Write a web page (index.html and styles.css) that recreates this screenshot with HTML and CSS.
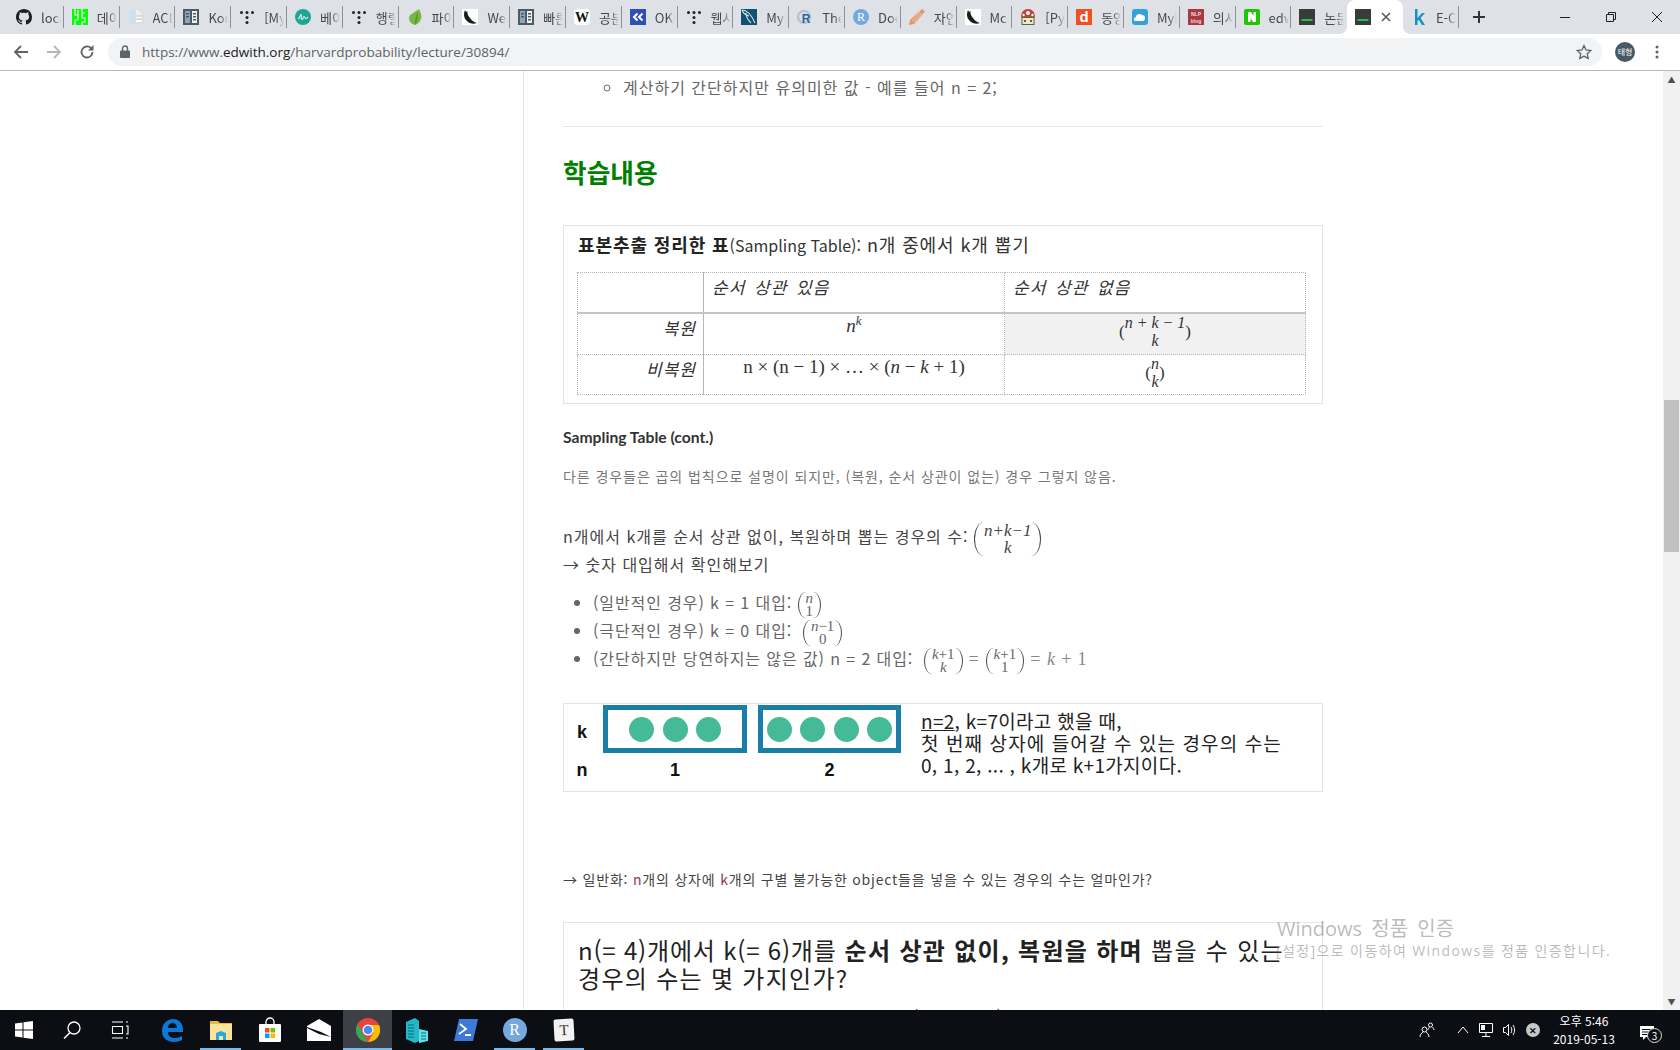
FILE: index.html
```html
<!DOCTYPE html>
<html lang="ko">

<head>
    <meta charset="UTF-8">
    <title>edwith - Harvard Probability</title>
    <link rel="stylesheet" href="styles.css">
</head>

<body>
    <svg class="sprite" xmlns="http://www.w3.org/2000/svg">
        <symbol id="i-gh" viewBox="0 0 16 16"><path fill="#1b1f23" d="M8 0C3.58 0 0 3.58 0 8c0 3.54 2.29 6.53 5.47 7.59.4.07.55-.17.55-.38 0-.19-.01-.82-.01-1.49-2.01.37-2.53-.49-2.69-.94-.09-.23-.48-.94-.82-1.13-.28-.15-.68-.52-.01-.53.63-.01 1.08.58 1.23.82.72 1.21 1.87.87 2.33.66.07-.52.28-.87.51-1.07-1.78-.2-3.64-.89-3.64-3.95 0-.87.31-1.59.82-2.15-.08-.2-.36-1.02.08-2.12 0 0 .67-.21 2.2.82.64-.18 1.32-.27 2-.27.68 0 1.36.09 2 .27 1.53-1.04 2.2-.82 2.2-.82.44 1.1.16 1.92.08 2.12.51.56.82 1.27.82 2.15 0 3.07-1.87 3.75-3.65 3.95.29.25.54.73.54 1.48 0 1.07-.01 1.93-.01 2.2 0 .21.15.46.55.38A8.013 8.013 0 0016 8c0-4.42-3.58-8-8-8z"/></symbol>
        <symbol id="i-green" viewBox="0 0 16 16"><rect width="16" height="16" fill="#0f0"/><path fill="none" stroke="#fff" stroke-width="1.200" d="M3 0v6h3V1M6 6v5H3v5M10 0v4h3M10 4v5h3v4h-3v3"/></symbol>
        <symbol id="i-doc" viewBox="0 0 16 16"><path fill="#cfe0ef" d="M1 1h7v14H1z"/><path fill="#eef1f4" d="M8 1h2l3 3v2H8z"/><path fill="#d8dde2" d="M6 6h10v9H6z"/><path fill="#fff" d="M8 8h6v1H8zM8 11h6v2H8z"/></symbol>
        <symbol id="i-panel" viewBox="0 0 16 16"><rect width="16" height="16" fill="#4a5a66"/><path fill="#8fa6b6" d="M2 2h5v12H2z"/><path fill="#eef2f5" d="M9 2h5v12H9z"/><path fill="#4a5a66" d="M10 4h3v1.500h-3zM10 7h3v1.500h-3zM10 10h3v1.500h-3zM3 4h3v1.500H3zM3 7h3v1.500H3z"/></symbol>
        <symbol id="i-dots" viewBox="0 0 16 16"><g fill="#222"><circle cx="2.500" cy="3.500" r="1.500"/><circle cx="8" cy="3.500" r="1.500"/><circle cx="13.500" cy="3.500" r="1.500"/><circle cx="8" cy="8.500" r="1.500"/><circle cx="8" cy="13.500" r="1.500"/></g></symbol>
        <symbol id="i-teal" viewBox="0 0 16 16"><circle cx="8" cy="8" r="8" fill="#1fa591"/><path fill="none" stroke="#d8f3ec" stroke-width="1.100" d="M3 9.500c1.500 1 2-4 3-4s-.5 5 1 5 1-3 2-3 .5 2 2 2 1.500-1 2-1.500"/></symbol>
        <symbol id="i-leaf" viewBox="0 0 16 16"><path fill="#7ab648" d="M12 0c2 4 3 7 2 10-1 3-3 5-6 6-3-1-6-3-6-7 0-4 7-6 10-9z"/><path fill="#5d9732" d="M8 16c-.5-5 .5-9 3-13 0 5 0 9-3 13z"/></symbol>
        <symbol id="i-feather" viewBox="0 0 16 16"><rect width="16" height="16" fill="#fff"/><path fill="#1c1c1c" d="M3 1c-2 5-1 9 3 12 3 2 6 2 9 1-3-1-5-2-7-5C6 7 5 4 5.500 2L4 3z"/></symbol>
        <symbol id="i-wiki" viewBox="0 0 16 16"><rect width="16" height="16" rx="4" fill="#fff"/><text x="8" y="12.500" text-anchor="middle" class="fav-text fav-wiki">W</text></symbol>
        <symbol id="i-ok" viewBox="0 0 16 16"><rect width="16" height="16" fill="#2f4fb4"/><path fill="none" stroke="#fff" stroke-width="2" d="M7.500 4.500 4 8l3.500 3.500M12.500 4.500 9 8l3.500 3.500"/></symbol>
        <symbol id="i-mysql" viewBox="0 0 16 16"><rect width="16" height="16" fill="#11526f"/><path fill="none" stroke="#cfe3ec" stroke-width="1.100" d="M1 1c5 0 9 4 13 13M1 1c1 4 4 5 7 6M5 4c0 4 2 7 5 10"/></symbol>
        <symbol id="i-rstudio" viewBox="0 0 16 16"><circle cx="7" cy="8" r="6" fill="none" stroke="#bcc3cb" stroke-width="2.400"/><text x="9" y="14" text-anchor="middle" class="fav-text fav-r">R</text></symbol>
        <symbol id="i-rdoc" viewBox="0 0 16 16"><circle cx="8" cy="8" r="8" fill="#75a8dc"/><text x="8" y="12" text-anchor="middle" class="fav-text fav-rdoc">R</text></symbol>
        <symbol id="i-pencil" viewBox="0 0 16 16"><path fill="#e8946a" d="M13 0l3 2.500L5 15l-5 1 1-5z"/><path fill="none" stroke="#fbe3d4" stroke-width=".7" d="M11 3 3 12M13 4l-8 9"/></symbol>
        <symbol id="i-mush" viewBox="0 0 16 16"><path fill="#c9403a" d="M1 8c0-5 3-8 7-8s7 3 7 8z"/><circle cx="8" cy="4" r="2" fill="#fff"/><circle cx="3.500" cy="6" r="1.200" fill="#fff"/><circle cx="12.500" cy="6" r="1.200" fill="#fff"/><rect x="2" y="8.500" width="12" height="7" fill="#f2e6c4" stroke="#4a6b46"/><path fill="#4a6b46" d="M4 11h2v2H4zM10 11h2v2h-2z"/></symbol>
        <symbol id="i-d" viewBox="0 0 16 16"><rect width="16" height="16" fill="#f04e23"/><text x="8" y="13" text-anchor="middle" class="fav-text fav-d">d</text></symbol>
        <symbol id="i-cloud" viewBox="0 0 16 16"><rect width="16" height="16" rx="3" fill="#36a0da"/><path fill="#fff" d="M3 12c-2-1-1-4 1-4 0-3 4-4 6-2 2 0 3 1 3 3s-1 3-2 3z"/></symbol>
        <symbol id="i-nlp" viewBox="0 0 16 16"><rect width="16" height="16" fill="#a8393f"/><text x="8" y="7" text-anchor="middle" class="fav-text fav-nlp">NLP</text><text x="8" y="14" text-anchor="middle" class="fav-text fav-nlp">blog</text></symbol>
        <symbol id="i-n" viewBox="0 0 16 16"><rect width="16" height="16" rx="2" fill="#1ec800"/><path fill="#fff" d="M4 3h3l2.500 4V3H12v10H9L6.500 9v4H4z"/></symbol>
        <symbol id="i-term" viewBox="0 0 16 16"><rect width="16" height="16" fill="#3a3a3a"/><rect x="2.500" y="10" width="11" height="2" fill="#1dc24b"/></symbol>
        <symbol id="i-k" viewBox="0 0 16 16"><path fill="#1293c4" d="M4 0h2.500v9L11 4h3l-4.500 5L14 16h-3L7.700 10.800 6.500 12v4H4z"/></symbol>
    </svg>

    <div class="tabstrip">
        <div class="tab"><svg class="fav"><use href="#i-gh"/></svg><span class="tab-title">localhost</span></div>
        <div class="tab"><svg class="fav"><use href="#i-green"/></svg><span class="tab-title">데이터</span></div>
        <div class="tab"><svg class="fav"><use href="#i-doc"/></svg><span class="tab-title">ACL</span></div>
        <div class="tab"><svg class="fav"><use href="#i-panel"/></svg><span class="tab-title">Korean</span></div>
        <div class="tab"><svg class="fav"><use href="#i-dots"/></svg><span class="tab-title">[My</span></div>
        <div class="tab"><svg class="fav"><use href="#i-teal"/></svg><span class="tab-title">베이즈</span></div>
        <div class="tab"><svg class="fav"><use href="#i-dots"/></svg><span class="tab-title">행렬</span></div>
        <div class="tab"><svg class="fav"><use href="#i-leaf"/></svg><span class="tab-title">파이썬</span></div>
        <div class="tab"><svg class="fav"><use href="#i-feather"/></svg><span class="tab-title">Welcome</span></div>
        <div class="tab"><svg class="fav"><use href="#i-panel"/></svg><span class="tab-title">빠른</span></div>
        <div class="tab"><svg class="fav"><use href="#i-wiki"/></svg><span class="tab-title">공분산</span></div>
        <div class="tab"><svg class="fav"><use href="#i-ok"/></svg><span class="tab-title">OKKY</span></div>
        <div class="tab"><svg class="fav"><use href="#i-dots"/></svg><span class="tab-title">웹사이트</span></div>
        <div class="tab"><svg class="fav"><use href="#i-mysql"/></svg><span class="tab-title">MySQL</span></div>
        <div class="tab"><svg class="fav"><use href="#i-rstudio"/></svg><span class="tab-title">The</span></div>
        <div class="tab"><svg class="fav"><use href="#i-rdoc"/></svg><span class="tab-title">Docs</span></div>
        <div class="tab"><svg class="fav"><use href="#i-pencil"/></svg><span class="tab-title">자연어</span></div>
        <div class="tab"><svg class="fav"><use href="#i-feather"/></svg><span class="tab-title">Mc</span></div>
        <div class="tab"><svg class="fav"><use href="#i-mush"/></svg><span class="tab-title">[Python</span></div>
        <div class="tab"><svg class="fav"><use href="#i-d"/></svg><span class="tab-title">동영상</span></div>
        <div class="tab"><svg class="fav"><use href="#i-cloud"/></svg><span class="tab-title">MyDrive</span></div>
        <div class="tab"><svg class="fav"><use href="#i-nlp"/></svg><span class="tab-title">의사결정</span></div>
        <div class="tab"><svg class="fav"><use href="#i-n"/></svg><span class="tab-title">edwith</span></div>
        <div class="tab no-sep"><svg class="fav"><use href="#i-term"/></svg><span class="tab-title">논문</span></div>
        <div class="tab tab-active">
            <svg class="fav"><use href="#i-term"/></svg>
            <svg class="tab-close" width="10" height="10" viewBox="0 0 10 10"><path stroke="#555" stroke-width="1.500" d="M1 1l8 8M9 1 1 9"/></svg>
        </div>
        <div class="tab"><svg class="fav"><use href="#i-k"/></svg><span class="tab-title">E-Commerce</span></div>
        <div class="new-tab">
            <svg width="14" height="14" viewBox="0 0 14 14"><path fill="none" stroke="#333" stroke-width="2" d="M7 1v12M1 7h12"/></svg>
        </div>
        <div class="window-controls">
            <svg width="12" height="12" viewBox="0 0 12 12"><path stroke="#222" d="M1 6.500h10"/></svg>
            <svg width="12" height="12" viewBox="0 0 12 12"><path fill="none" stroke="#222" d="M1.500 3.500h7v7h-7zM3.500 3.500v-2h7v7h-2"/></svg>
            <svg width="12" height="12" viewBox="0 0 12 12"><path stroke="#222" d="M1 1l10 10M11 1 1 11"/></svg>
        </div>
    </div>

    <div class="toolbar">
        <svg class="tool" viewBox="0 0 16 16"><path fill="none" stroke="#5f6368" stroke-width="1.800" d="M15 8H2M8 2 2 8l6 6"/></svg>
        <svg class="tool" viewBox="0 0 16 16"><path fill="none" stroke="#b5b8bb" stroke-width="1.800" d="M1 8h13M8 2l6 6-6 6"/></svg>
        <svg class="tool" viewBox="0 0 16 16"><path fill="none" stroke="#5f6368" stroke-width="1.800" d="M13.500 8A5.500 5.500 0 1 1 12 4.200"/><path fill="#5f6368" d="M14.500 1v5.500H9z"/></svg>
        <div class="omnibox">
            <svg class="lock" width="10" height="13" viewBox="0 0 10 13"><path fill="none" stroke="#5f6368" stroke-width="1.400" d="M2.500 6V3.500a2.500 2.500 0 0 1 5 0V6"/><rect y="5.500" width="10" height="7.500" rx="1" fill="#5f6368"/></svg>
            <span class="url"><span class="url-dim">https://www.</span><span class="url-host">edwith.org</span><span class="url-dim">/harvardprobability/lecture/30894/</span></span>
            <svg class="star" width="16" height="16" viewBox="0 0 16 16"><path fill="none" stroke="#5f6368" stroke-width="1.300" d="M8 1.500l2 4.500 4.800.5-3.600 3.200 1 4.800L8 12.100l-4.200 2.400 1-4.800L1.200 6.500 6 6z"/></svg>
        </div>
        <div class="avatar">태형</div>
        <svg class="kebab" width="4" height="14" viewBox="0 0 4 14"><g fill="#5f6368"><circle cx="2" cy="2" r="1.500"/><circle cx="2" cy="7" r="1.500"/><circle cx="2" cy="12" r="1.500"/></g></svg>
    </div>

    <div class="viewport">
        <aside class="sidebar"></aside>
        <main class="lecture">
            <ul class="sub-list">
                <li>계산하기 간단하지만 유의미한 값 - 예를 들어 n = 2;</li>
            </ul>
            <hr class="rule">
            <h2 class="section-title">학습내용</h2>

            <section class="note note-table">
                <p class="note-title"><b>표본추출 정리한 표</b><span class="latin">(Sampling Table):</span> n개 중에서 k개 뽑기</p>
                <table class="sampling">
                    <tr class="head-row">
                        <th class="row-head"></th>
                        <th>순서 상관 있음</th>
                        <th>순서 상관 없음</th>
                    </tr>
                    <tr class="row-one">
                        <td class="row-head">복원</td>
                        <td class="math-cell"><i>n<sup>k</sup></i></td>
                        <td class="math-cell shaded">
                            <span class="binom binom-glyph"><span class="binom-stack"><i>n + k − 1</i><i>k</i></span></span>
                        </td>
                    </tr>
                    <tr class="row-two">
                        <td class="row-head">비복원</td>
                        <td class="math-cell">n × (n − 1) × … × (<i>n</i> − <i>k</i> + 1)</td>
                        <td class="math-cell">
                            <span class="binom binom-glyph"><span class="binom-stack"><i>n</i><i>k</i></span></span>
                        </td>
                    </tr>
                </table>
            </section>

            <h3 class="sub-title">Sampling Table (cont.)</h3>
            <p class="muted-note">다른 경우들은 곱의 법칙으로 설명이 되지만, (복원, 순서 상관이 없는) 경우 그렇지 않음.</p>

            <p class="body-line first-line">n개에서 k개를 순서 상관 없이, 복원하며 뽑는 경우의 수:
                <span class="binom binom-big"><span class="binom-stack"><i>n+k−1</i><i>k</i></span></span>
            </p>
            <p class="body-line">→ 숫자 대입해서 확인해보기</p>

            <ul class="case-list">
                <li>(일반적인 경우) k = 1 대입: <span class="binom"><span class="binom-stack"><i>n</i><span>1</span></span></span></li>
                <li>(극단적인 경우) k = 0 대입: &nbsp;<span class="binom"><span class="binom-stack"><span><i>n</i>−1</span><span>0</span></span></span></li>
                <li>(간단하지만 당연하지는 않은 값) n = 2 대입: &nbsp;<span class="binom"><span class="binom-stack"><span><i>k</i>+1</span><i>k</i></span></span><span class="math-tail math-eq">=</span><span class="binom"><span class="binom-stack"><span><i>k</i>+1</span><span>1</span></span></span><span class="math-tail math-eq">=</span><span class="math-tail"><i>k</i> + 1</span></li>
            </ul>

            <section class="note note-boxes">
                <div class="box-grid">
                    <b class="axis axis-k">k</b>
                    <div class="urn">
                        <span class="ball"></span><span class="ball"></span><span class="ball"></span>
                    </div>
                    <div class="urn">
                        <span class="ball"></span><span class="ball"></span><span class="ball"></span><span class="ball"></span>
                    </div>
                    <b class="axis">n</b>
                    <b class="axis">1</b>
                    <b class="axis">2</b>
                </div>
                <p class="box-text"><u>n=2</u>, k=7이라고 했을 때,<br><span class="box-wide">첫 번째 상자에 들어갈 수 있는 경우의 수는</span><br>0, 1, 2, ... , k개로 k+1가지이다.</p>
            </section>

            <p class="general">→ 일반화: <span class="pink">n</span>개의 상자에 <span class="pink">k</span>개의 구별 불가능한 object들을 넣을 수 있는 경우의 수는 얼마인가?</p>

            <section class="note note-quiz">
                <p class="quiz-text"><span class="quiz-lead">n(= 4)개에서 k(= 6)개를</span> <b>순서 상관 없이, 복원을 하며</b> 뽑을 수 있는<br>경우의 수는 몇 가지인가?</p>
                <p class="quiz-math"><span>(</span><span>)</span></p>
            </section>
        </main>
        <div class="scrollbar">
            <span class="scroll-arrow">▲</span>
            <div class="scroll-track"><div class="scroll-thumb"></div></div>
            <span class="scroll-arrow">▼</span>
        </div>
        <div class="watermark">
            <div class="wm-title">Windows 정품 인증</div>
            <div class="wm-sub">[설정]으로 이동하여 Windows를 정품 인증합니다.</div>
        </div>
    </div>

    <footer class="taskbar">
        <div class="task-group">
            <div class="task-item task-sys">
                <svg width="18" height="18" viewBox="0 0 18 18"><path fill="#fff" d="M0 2.500 7.500 1.400v7.100H0zM8.500 1.300 18 0v8.500H8.500zM0 9.500h7.500v7.100L0 15.500zM8.500 9.500H18V18l-9.500-1.300z"/></svg>
            </div>
            <div class="task-item task-sys">
                <svg width="18" height="18" viewBox="0 0 18 18"><circle cx="11" cy="7" r="6" fill="none" stroke="#fff" stroke-width="1.300"/><path stroke="#fff" stroke-width="1.500" d="M7 11.500 1 17.500"/></svg>
            </div>
            <div class="task-item task-sys">
                <svg width="18" height="18" viewBox="0 0 18 18"><path fill="none" stroke="#fff" stroke-width="1.100" d="M1 1h11M1 17h11M1.500 5.500h10v7h-10zM15 1h2M15 5h2v8h-2M15 17h2"/></svg>
            </div>
            <div class="task-item">
                <svg width="24" height="24" viewBox="0 0 24 24"><path fill="#0a78d7" d="M2 13C2 5 8 1 13 1c6 0 10 4 10 11v2H8c0 4 3 6 7 6 3 0 5-1 7-2v4c-2 1-5 2-8 2C7 24 2 20 2 13zm6-3h9c0-3-2-5-4-5-3 0-5 2-5 5z"/></svg>
            </div>
            <div class="task-item task-open">
                <svg width="24" height="24" viewBox="0 0 24 24"><path fill="#e8b93f" d="M1 3h8l2 2h12v4H1z"/><path fill="#fbe49a" d="M1 6h22v16H1z"/><path fill="#29a8e0" d="M7 22v-7l5-2 5 2v7h-3v-4h-4v4z"/></svg>
            </div>
            <div class="task-item">
                <svg width="24" height="26" viewBox="0 0 24 26"><path fill="none" stroke="#fff" stroke-width="1.300" d="M8 8V5a4 4 0 0 1 8 0v3"/><rect x="1" y="7" width="22" height="18" rx="1" fill="#fff"/><path fill="#f25022" d="M7 11h4.500v4.500H7z"/><path fill="#7fba00" d="M12.500 11H17v4.500h-4.500z"/><path fill="#00a4ef" d="M7 16.500h4.500V21H7z"/><path fill="#ffb900" d="M12.500 16.500H17V21h-4.500z"/></svg>
            </div>
            <div class="task-item">
                <svg width="24" height="22" viewBox="0 0 24 22"><path fill="#fff" d="M0 7 12 0l12 7v15H0z"/><path fill="#0b0e13" d="M0 8l14 5 10 5-12-3L0 9z"/></svg>
            </div>
            <div class="task-item task-open task-active">
                <svg width="24" height="24" viewBox="0 0 24 24"><circle cx="12" cy="12" r="12" fill="#e8453c"/><path fill="#34a853" d="M12 24A12 12 0 0 1 1.600 6l6 10.500L12 24z"/><path fill="#fbbc05" d="M12 24 17.500 14.500 12 7h11a12 12 0 0 1-11 17z"/><circle cx="12" cy="12" r="5.500" fill="#fff"/><circle cx="12" cy="12" r="4.300" fill="#4a8af4"/></svg>
            </div>
            <div class="task-item">
                <svg width="24" height="26" viewBox="0 0 24 26"><path fill="#23b7c8" d="M1 5l9-4 4 3v20l-4 2-9-4z"/><path fill="#5fe0ea" d="M14 12l9 2v10l-9 2z"/><path stroke="#0b6c78" d="M3 8h6M3 11h6M3 14h6M3 17h6M3 20h6M16 16h5M16 19h5M16 22h5"/></svg>
            </div>
            <div class="task-item">
                <svg width="24" height="22" viewBox="0 0 24 22"><path fill="#3e78d8" d="M5 0h19l-5 22H0z"/><path fill="none" stroke="#fff" stroke-width="1.800" d="M6 5l6 5-7 5M11 16h6"/></svg>
            </div>
            <div class="task-item task-open">
                <span class="r-icon">R</span>
            </div>
            <div class="task-item task-open">
                <span class="t-icon">T</span>
            </div>
        </div>
        <div class="tray">
            <svg class="tray-people" width="16" height="16" viewBox="0 0 16 16"><g fill="none" stroke="#fff"><circle cx="5.500" cy="7.500" r="2.500"/><path d="M1 15c0-3 2-4 3-5M10 15c0-3-2-4-3-5"/><circle cx="11.500" cy="3" r="2"/><path d="M9 8c0-1 1-2 1.500-3M15 8c0-1-1-2-1.500-3"/></g></svg>
            <svg class="tray-up" width="12" height="8" viewBox="0 0 12 8"><path fill="none" stroke="#fff" d="M1 7l5-6 5 6"/></svg>
            <svg class="tray-net" width="16" height="16" viewBox="0 0 16 16"><path fill="none" stroke="#fff" d="M1.500 1.500h13v9h-13zM8 10.500v4M4 14.500h8"/><path fill="#fff" d="M3 3h4v5H3z"/></svg>
            <svg class="tray-vol" width="16" height="16" viewBox="0 0 16 16"><path fill="none" stroke="#fff" d="M1.500 5.500h2l3-3v11l-3-3h-2zM9 5c1 2 1 4 0 6M11 3c2 3 2 7 0 10"/></svg>
            <span class="tray-x">✕</span>
            <div class="clock"><span>오후 5:46</span><span>2019-05-13</span></div>
            <div class="notify">
                <svg width="16" height="16" viewBox="0 0 16 16"><path fill="#fff" d="M1 1h14v11H7l-3 3v-3H1z"/><path stroke="#0b0e13" d="M3 4.500h10M3 7h10M3 9.500h10"/></svg>
                <span class="notify-count">3</span>
            </div>
        </div>
    </footer>
</body>

</html>
```

FILE: styles.css
```css
* {
    box-sizing: border-box;
}

html,
body {
    margin: 0;
    height: 100%;
    overflow: hidden;
}

body {
    display: flex;
    flex-direction: column;
    height: 1050px;
    font-family: "Noto Sans CJK KR", "Noto Sans", sans-serif;
    background: #fff;
    color: #222;
}

.sprite {
    display: none;
}

/* browser chrome */
.tabstrip {
    display: flex;
    align-items: center;
    flex: none;
    height: 34px;
    padding-left: 8px;
    background: #dee1e6;
}

.tab {
    display: flex;
    align-items: center;
    flex: none;
    width: 55.8px;
    height: 22px;
    padding-left: 8px;
    border-right: 1px solid #8d9196;
    font-size: 13px;
    color: #45494e;
}

.tab.no-sep {
    border-right: none;
}

.tab-active {
    position: relative;
    height: 34px;
    border-right: none;
    border-radius: 8px 8px 0 0;
    background: #fff;
}

.tab-active::before,
.tab-active::after {
    content: "";
    position: absolute;
    bottom: 0;
    width: 8px;
    height: 8px;
}

.tab-active::before {
    left: -8px;
    background: radial-gradient(circle at 0 0, transparent 8px, #fff 8px);
}

.tab-active::after {
    right: -8px;
    background: radial-gradient(circle at 100% 0, transparent 8px, #fff 8px);
}

.fav {
    flex: none;
    width: 16px;
    height: 16px;
}

.fav-text {
    font-family: "Liberation Sans", sans-serif;
    font-weight: bold;
}

.fav-wiki {
    font-family: "Liberation Serif", serif;
    font-size: 14px;
    fill: #111;
}

.fav-r {
    font-size: 12px;
    fill: #2468a8;
}

.fav-rdoc {
    font-family: "Liberation Serif", serif;
    font-size: 12px;
    font-weight: normal;
    fill: #fff;
}

.fav-d {
    font-size: 15px;
    fill: #fff;
}

.fav-nlp {
    font-size: 5px;
    fill: #f5d9da;
}

.tab-title {
    width: 20px;
    margin-left: 9px;
    overflow: hidden;
    white-space: nowrap;
    -webkit-mask-image: linear-gradient(to right, #000 60%, transparent);
    mask-image: linear-gradient(to right, #000 60%, transparent);
}

.tab-close {
    flex: none;
    margin-left: 10px;
}

.new-tab {
    display: flex;
    justify-content: center;
    flex: none;
    width: 40px;
}

.window-controls {
    display: flex;
    justify-content: space-between;
    align-items: center;
    flex: none;
    width: 104px;
    margin-left: auto;
    margin-right: 17px;
}

.toolbar {
    display: flex;
    align-items: center;
    flex: none;
    height: 37px;
    padding: 0 0 1px 13px;
    border-bottom: 1px solid #b8b8b8;
    background: #fff;
}

.tool {
    flex: none;
    width: 16px;
    height: 16px;
    margin-right: 17px;
}

.omnibox {
    display: flex;
    align-items: center;
    flex: none;
    width: 1494px;
    height: 28px;
    margin-left: -4px;
    padding: 0 10px 0 12px;
    border-radius: 14px;
    background: #f1f3f4;
}

.lock {
    flex: none;
    margin-right: 12px;
}

.url {
    font-family: "Open Sans", sans-serif;
    font-size: 13.5px;
    white-space: nowrap;
}

.url-dim {
    color: #5f6368;
}

.url-host {
    color: #202124;
}

.star {
    flex: none;
    margin-left: auto;
}

.avatar {
    display: flex;
    justify-content: center;
    align-items: center;
    flex: none;
    width: 20px;
    height: 20px;
    margin-left: 13px;
    border-radius: 50%;
    background: #455a64;
    color: #fff;
    font-size: 8px;
}

.kebab {
    flex: none;
    margin-left: 20px;
}

/* page area */
.viewport {
    position: relative;
    display: flex;
    flex: 1;
    min-height: 0;
    overflow: hidden;
}

.sidebar {
    flex: none;
    width: 524px;
    border-right: 1px solid #e4e4e4;
}

.lecture {
    flex: none;
    width: 760px;
    margin-left: 39px;
    font-size: 16px;
    letter-spacing: 1px;
    color: #666;
}

.sub-list {
    margin: 4px 0 0;
    padding-left: 60px;
    list-style: circle;
    line-height: 24px;
}

.rule {
    height: 1px;
    margin: 27px 0 0;
    border: none;
    background: #e6e6e6;
}

.section-title {
    margin: 27px 0 0;
    font-size: 25.7px;
    line-height: 36px;
    font-weight: bold;
    letter-spacing: 0;
    color: #008000;
}

.note {
    border: 1px solid #e4e4e4;
    background: #fff;
}

.note-table {
    height: 179px;
    margin-top: 35px;
    padding: 6px 15px 0 14px;
    color: #333;
}

.note-title {
    margin: 0;
    font-size: 18px;
    line-height: 24px;
    letter-spacing: .9px;
    color: #333;
}

.note-title b {
    color: #222;
}

.latin {
    font-size: 16px;
    letter-spacing: 0;
}

.sampling {
    width: 729px;
    height: 122px;
    margin: 15px 0 0 -1px;
    border-collapse: collapse;
    table-layout: fixed;
    font-size: 17px;
    word-spacing: 3px;
    color: #333;
}

.sampling th,
.sampling td {
    padding: 2px 8px;
    border: 1px dotted #b5b5b5;
    vertical-align: top;
    line-height: 24px;
}

.sampling th {
    font-weight: normal;
    font-style: italic;
    text-align: left;
}

.sampling .row-head {
    width: 126px;
    padding-right: 7px;
    text-align: right;
    font-style: italic;
    border-right: 1px solid #b5b5b5;
}

.head-row {
    height: 40px;
    border-bottom: 2px solid #c4c4c4;
}

.row-one {
    height: 42px;
}

.row-two {
    height: 40px;
}

.sampling .math-cell {
    padding: 0 6px;
    font-family: "Liberation Serif", serif;
    font-size: 19px;
    text-align: center;
    letter-spacing: 0;
    word-spacing: 0;
}

.math-cell sup {
    font-size: 13px;
    line-height: 0;
}

.sampling td.shaded {
    background: #f1f1f1;
}

/* binomials: parens are just curved borders */
.binom {
    display: inline-flex;
    align-items: stretch;
    vertical-align: middle;
    font-family: "Liberation Serif", serif;
    font-size: 15px;
    line-height: 13px;
    letter-spacing: 0;
    color: #666;
}

.binom::before,
.binom::after {
    content: "";
    flex: none;
    width: 7px;
}

.binom::before {
    border-left: 1.3px solid #444;
    border-radius: 100% 0 0 100% / 50%;
}

.binom::after {
    border-right: 1.3px solid #444;
    border-radius: 0 100% 100% 0 / 50%;
}

.binom-stack {
    display: flex;
    flex-direction: column;
    align-items: center;
}

.binom-big {
    margin: -4px 0;
    font-size: 17px;
    line-height: 17px;
    color: #444;
}

.binom-big::before,
.binom-big::after {
    width: 9px;
}

.binom-glyph {
    align-items: center;
    font-size: 16px;
    line-height: 18px;
    color: #333;
}

/* the images in the table use a small round paren instead */
.binom-glyph::before,
.binom-glyph::after {
    width: auto;
    border: none;
    border-radius: 0;
    font-size: 17px;
}

.binom-glyph::before {
    content: "(";
}

.binom-glyph::after {
    content: ")";
}

.sub-title {
    margin: 23px 0 0;
    font-family: Lato, sans-serif;
    font-size: 15.7px;
    line-height: 20px;
    font-weight: bold;
    letter-spacing: 0;
    color: #333;
}

.muted-note {
    margin: 19px 0 0;
    font-size: 14px;
    line-height: 20px;
    letter-spacing: .93px;
    color: #777;
}

.body-line {
    margin: 0;
    height: 28px;
    line-height: 28px;
    color: #444;
}

.first-line {
    margin-top: 36px;
}

.case-list {
    margin: 10px 0 0;
    padding-left: 30px;
    letter-spacing: .9px;
    color: #666;
}

.case-list li {
    height: 28px;
    line-height: 28px;
}

.math-tail {
    font-family: "Liberation Serif", serif;
    font-size: 18px;
    letter-spacing: .8px;
    color: #888;
}

.math-eq {
    margin: 0 6px;
}

.note-boxes {
    display: flex;
    height: 89px;
    margin-top: 31px;
    padding: 1px 0 0 8px;
    letter-spacing: 0;
}

.box-grid {
    display: grid;
    grid-template-columns: 20px 144px 143px;
    grid-template-rows: 48px 22px;
    gap: 6px 11px;
    font-family: "Liberation Sans", sans-serif;
    font-size: 18px;
    color: #111;
    text-align: center;
    line-height: 22px;
}

.axis-k {
    padding-top: 16px;
}

.urn {
    display: flex;
    justify-content: center;
    align-items: center;
    gap: 8.500px;
    border: 5px solid #1a7fa8;
}

.ball {
    width: 25px;
    height: 25px;
    border-radius: 50%;
    background: #45ba96;
}

.box-text {
    margin: 5px 0 0 20px;
    font-size: 19px;
    line-height: 22px;
    letter-spacing: .3px;
    color: #222;
}

.box-wide {
    letter-spacing: 1.100px;
}

.general {
    margin: 77px 0 0;
    font-size: 14px;
    line-height: 20px;
    letter-spacing: .8px;
    color: #444;
}

.pink {
    color: #8a3a5a;
}

.note-quiz {
    height: 200px;
    margin-top: 33px;
    padding: 13px 14px 0;
}

.quiz-text {
    margin: 0;
    font-size: 24px;
    line-height: 28px;
    letter-spacing: 1.300px;
    color: #222;
}

.quiz-lead {
    letter-spacing: .8px;
}

/* only the tops of this formula's parens show above the taskbar */
.quiz-math {
    display: flex;
    justify-content: center;
    gap: 76px;
    height: 50px;
    margin: 10px 0 0 30px;
    font-family: "Liberation Serif", serif;
    font-size: 50px;
    line-height: 50px;
    font-weight: 300;
    color: #333;
}

.scrollbar {
    display: flex;
    flex-direction: column;
    align-items: center;
    flex: none;
    width: 17px;
    margin-left: auto;
    background: #f1f1f1;
}

.scroll-arrow {
    flex: none;
    height: 17px;
    font-size: 8px;
    line-height: 17px;
    color: #505050;
}

.scroll-track {
    flex: 1;
    width: 100%;
    padding-top: 312px;
}

.scroll-thumb {
    width: 15px;
    height: 152px;
    margin: 0 auto;
    background: #c1c1c1;
}

.watermark {
    position: absolute;
    left: 1276px;
    top: 845px;
    font-family: "Open Sans", "Noto Sans CJK KR", sans-serif;
    color: rgba(120, 120, 120, 0.5);
    white-space: nowrap;
}

.wm-title {
    padding-left: 1px;
    font-size: 20px;
    line-height: 25px;
    word-spacing: 4px;
}

.wm-sub {
    font-size: 14px;
    line-height: 20px;
    letter-spacing: 1.400px;
}

/* windows taskbar */
.taskbar {
    position: relative;
    display: flex;
    justify-content: space-between;
    flex: none;
    height: 40px;
    background: #0b0e13;
    color: #fff;
}

.task-group {
    display: flex;
}

.task-item {
    position: relative;
    display: flex;
    justify-content: center;
    align-items: center;
    flex: none;
    width: 49px;
    height: 40px;
}

.task-sys {
    width: 48px;
}

.task-sys:nth-child(3) {
    margin-right: 3px;
}

.task-open::after {
    content: "";
    position: absolute;
    left: 4px;
    right: 4px;
    bottom: 0;
    height: 2px;
    background: #76b9ed;
}

.task-active {
    background: #3d4045;
}

.task-active::after {
    left: 0;
    right: 0;
}

.r-icon {
    display: flex;
    justify-content: center;
    align-items: center;
    width: 24px;
    height: 24px;
    border-radius: 50%;
    background: #75a8dc;
    color: #fff;
    font-family: "Liberation Serif", serif;
    font-size: 16px;
}

.t-icon {
    display: flex;
    justify-content: center;
    align-items: center;
    width: 20px;
    height: 22px;
    border-radius: 2px;
    background: #f2f2f2;
    color: #333;
    font-family: "Liberation Serif", serif;
    font-size: 15px;
    transform: rotate(-3deg);
}

.tray {
    display: flex;
    align-items: center;
    padding-right: 25px;
}

.tray-people {
    margin-right: 22px;
}

.tray-up {
    margin-right: 9px;
}

.tray-net {
    margin-right: 8px;
}

.tray-vol {
    margin-right: 8px;
}

.tray-x {
    display: flex;
    justify-content: center;
    align-items: center;
    width: 14px;
    height: 14px;
    border-radius: 50%;
    background: #c8c8c8;
    color: #111;
    font-size: 9px;
    font-weight: bold;
}

.clock {
    display: flex;
    flex-direction: column;
    align-items: center;
    width: 66px;
    margin-left: 11px;
    font-size: 12px;
    line-height: 18px;
}

.notify {
    position: relative;
    margin-left: 22px;
    height: 16px;
}

.notify-count {
    position: absolute;
    left: 8px;
    top: 6px;
    width: 15px;
    height: 15px;
    border: 1px solid #ddd;
    border-radius: 50%;
    background: #0b0e13;
    font-size: 10px;
    line-height: 13px;
    text-align: center;
}
```
